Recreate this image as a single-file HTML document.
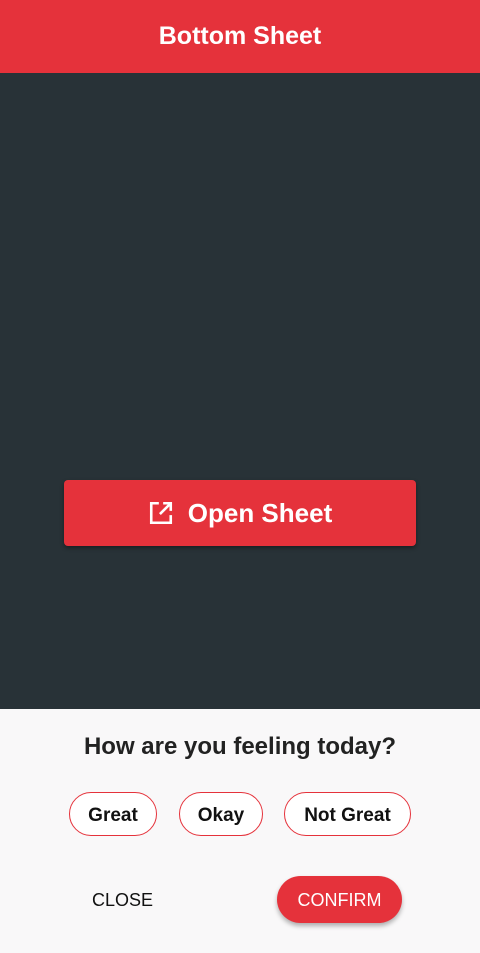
<!DOCTYPE html>
<html><head><style>
body{margin:0;width:480px;height:953px;position:relative;overflow:hidden;font-family:"Liberation Sans",sans-serif;background:#283237}
.top{position:absolute;left:0;top:0;width:480px;height:73px;background:#e5323b;color:#fff;font-size:25px;font-weight:bold;text-align:center;line-height:73px}
.btn{position:absolute;left:64px;top:480px;width:352px;height:66px;background:#e5323b;border-radius:4px;box-shadow:0 2px 4px rgba(0,0,0,.4);color:#fff;font-size:26px;font-weight:bold;display:flex;align-items:center;justify-content:center}
.sheet{position:absolute;left:0;top:709px;width:480px;height:244px;background:#f9f8f9}
.q{position:absolute;top:24px;width:480px;text-align:center;font-size:24px;font-weight:bold;color:#222}
.chip{position:absolute;top:83px;height:44px;border:1.5px solid #e5323b;border-radius:22px;background:#fff;font-size:19px;font-weight:bold;color:#111;display:flex;align-items:center;justify-content:center;box-sizing:border-box;padding-top:3px}
.close{position:absolute;left:92px;top:181px;font-size:18px;color:#111}
.conf{position:absolute;left:277px;top:167px;width:125px;height:47px;border-radius:24px;background:#e5323b;color:#fff;font-size:18px;display:flex;align-items:center;justify-content:center;box-shadow:0 3px 5px rgba(0,0,0,.3);padding-top:2px;box-sizing:border-box}
</style></head><body>
<div class="top">Bottom Sheet</div>
<div class="btn"><svg width="26" height="26" viewBox="0 0 24 24" style="margin-right:14px"><path d="M10 3H3v18h18v-7M14 3h7v7M21 3L11 13" fill="none" stroke="#fff" stroke-width="2.4"/></svg>Open Sheet</div>
<div class="sheet">
<div class="q">How are you feeling today?</div>
<div class="chip" style="left:69px;width:88px">Great</div>
<div class="chip" style="left:179px;width:84px">Okay</div>
<div class="chip" style="left:284px;width:127px">Not Great</div>
<div class="close">CLOSE</div>
<div class="conf">CONFIRM</div>
</div>
</body></html>
